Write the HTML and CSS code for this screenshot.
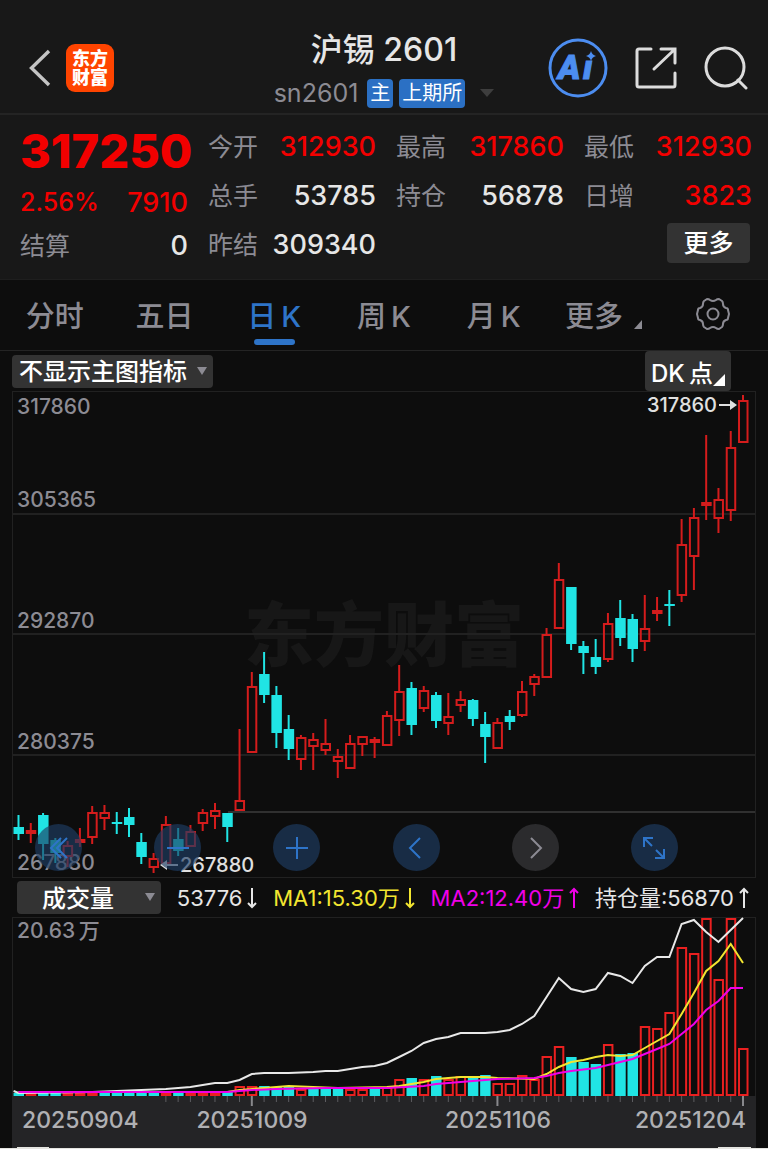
FILE: index.html
```html
<!doctype html>
<html lang="zh-CN">
  <head>
    <meta charset="utf-8" />
    <meta name="viewport" content="width=device-width, initial-scale=1" />
    <title>沪锡 2601</title>
    <link rel="stylesheet" href="styles.css">
  </head>

  <body>
    <header class="header">
      <div class="header-left">
        <button class="icon-button" aria-label="返回">
          <svg width="22" height="38" viewBox="0 0 22 38" fill="none" stroke="#c4c4c4" stroke-width="3.4"><path d="M20 2 L2.5 19 L20 36" /></svg>
        </button>
        <div class="logo">东方<br>财富</div>
      </div>

      <div class="header-title">
        <h1>沪锡 2601</h1>
        <div class="subtitle">
          <span class="code">sn2601</span>
          <span class="badge">主</span>
          <span class="badge">上期所</span>
          <svg class="caret" width="14" height="8" viewBox="0 0 14 8"><path d="M0 0 H14 L7 8 Z" fill="#3e3e3e" /></svg>
        </div>
      </div>

      <div class="header-right">
        <button class="icon-button" aria-label="AI">
          <svg width="60" height="60" viewBox="0 0 60 60">
            <circle cx="30" cy="30" r="28" fill="none" stroke="#4c8df0" stroke-width="3" />
            <text class="ai-text" x="10" y="41">A</text>
            <text class="ai-text" x="35" y="41">ı</text>
            <path d="M43 13 Q44 17 48 18 Q44 19 43 23 Q42 19 38 18 Q42 17 43 13 Z" fill="#4c8df0" />
          </svg>
        </button>
        <button class="icon-button" aria-label="分享">
          <svg width="42" height="42" viewBox="0 0 42 42" fill="none" stroke="#dcdcdc" stroke-width="3" stroke-linecap="round">
            <path d="M16 2 H4 Q2 2 2 4 V38 Q2 40 4 40 H38 Q40 40 40 38 V26" />
            <path d="M26 2 H40 V16 M39 3 L19 22" />
          </svg>
        </button>
        <button class="icon-button" aria-label="搜索">
          <svg width="44" height="44" viewBox="0 0 44 44" fill="none" stroke="#dcdcdc" stroke-width="3" stroke-linecap="round">
            <circle cx="21" cy="21" r="19" />
            <path d="M34 34 L42 42" />
          </svg>
        </button>
      </div>
    </header>

    <section class="quote">
      <div class="summary">
        <div class="price">317250</div>
        <div class="change"><span class="percent">2.56%</span><span>7910</span></div>
        <div class="settle"><span class="label">结算</span><span>0</span></div>
      </div>
      <div class="column">
        <div class="item"><span class="label">今开</span><span class="up">312930</span></div>
        <div class="item"><span class="label">总手</span><span>53785</span></div>
        <div class="item"><span class="label">昨结</span><span>309340</span></div>
      </div>
      <div class="column">
        <div class="item"><span class="label">最高</span><span class="up">317860</span></div>
        <div class="item"><span class="label">持仓</span><span>56878</span></div>
      </div>
      <div class="column">
        <div class="item"><span class="label">最低</span><span class="up">312930</span></div>
        <div class="item"><span class="label">日增</span><span class="up">3823</span></div>
        <div class="item more"><button class="more-button">更多</button></div>
      </div>
    </section>

    <nav class="tabs">
      <button class="tab">分时</button>
      <button class="tab">五日</button>
      <button class="tab active">日&thinsp;K</button>
      <button class="tab">周&thinsp;K</button>
      <button class="tab">月&thinsp;K</button>
      <button class="tab">更多<svg class="corner" width="8" height="9" viewBox="0 0 8 9"><path d="M8 0 V9 H0 Z" fill="#8c8b93" /></svg></button>
      <button class="tab" aria-label="设置">
        <svg width="34" height="32" viewBox="0 0 34 32" fill="none" stroke="#8c8b93" stroke-width="2" stroke-linejoin="round">
          <path d="M11 1 Q13 1 14 2 Q17 4 20 2 Q21 1 23 1 L26 3 Q27 4 27 6 Q27 9 30 10 Q32 10 32 12 L33 16 L32 20 Q32 22 30 22 Q27 23 27 26 Q27 28 26 29 L23 31 Q21 31 20 30 Q17 28 14 30 Q13 31 11 31 L8 29 Q7 28 7 26 Q7 23 4 22 Q2 22 2 20 L1 16 L2 12 Q2 10 4 10 Q7 9 7 6 Q7 4 8 3 Z" />
          <circle cx="17" cy="16" r="5.5" />
        </svg>
      </button>
    </nav>

    <main>
      <div class="toolbar">
        <div class="picker">
          <select class="main-select" aria-label="主图指标"><option>不显示主图指标</option></select>
        </div>
        <button class="dk-button">DK&thinsp;点<svg width="12" height="12" viewBox="0 0 12 12"><path d="M12 0 V12 H0 Z" fill="#fff" /></svg></button>
      </div>

      <div class="kline">
        <svg id="kline" class="chart" viewBox="12 391 744 487"></svg>
        <div class="controls">
          <button class="round" aria-label="最左">
            <svg width="24" height="24" viewBox="0 0 24 24"><path d="M14 2 L4 12 L14 22 M20 2 L10 12 L20 22" /></svg>
          </button>
          <button class="round" aria-label="缩小">
            <svg width="24" height="24" viewBox="0 0 24 24"><path d="M1 12 H23" /></svg>
          </button>
          <button class="round" aria-label="放大">
            <svg width="24" height="24" viewBox="0 0 24 24"><path d="M1 12 H23 M12 1 V23" /></svg>
          </button>
          <button class="round" aria-label="左移">
            <svg width="24" height="24" viewBox="0 0 24 24"><path d="M16 2 L6 12 L16 22" /></svg>
          </button>
          <button class="round disabled" aria-label="右移">
            <svg width="24" height="24" viewBox="0 0 24 24"><path d="M8 2 L18 12 L8 22" /></svg>
          </button>
          <button class="round" aria-label="全屏">
            <svg width="24" height="24" viewBox="0 0 24 24"><path d="M10 10 L2 2 M2 11 V2 H11 M14 14 L22 22 M22 13 V22 H13" /></svg>
          </button>
        </div>
      </div>

      <div class="indicators">
        <div class="picker">
          <select class="volume-select" aria-label="副图指标"><option>成交量</option></select>
        </div>
        <span class="value">53776<svg width="10" height="22" viewBox="0 0 10 22"><path d="M5 1 V20 M1 16 L5 20 L9 16" /></svg></span>
        <span class="value ma1">MA1:15.30万<svg width="10" height="22" viewBox="0 0 10 22"><path d="M5 1 V20 M1 16 L5 20 L9 16" /></svg></span>
        <span class="value ma2">MA2:12.40万<svg width="10" height="22" viewBox="0 0 10 22"><path d="M5 21 V2 M1 6 L5 2 L9 6" /></svg></span>
        <span class="value">持仓量:56870<svg width="10" height="22" viewBox="0 0 10 22"><path d="M5 21 V2 M1 6 L5 2 L9 6" /></svg></span>
      </div>

      <svg id="volume" class="chart" viewBox="12 917 744 231"></svg>
    </main>
    <footer class="next-panel"></footer>

    <script src="script.js"></script>
  </body>
</html>
```

FILE: styles.css
```css
body {
  margin: 0;
  background-color: #0d0d0d;
  color: #e6e6e6;
  font-family: Inter, 'Noto Sans CJK SC', sans-serif;
}

button, select {
  border: none;
  margin: 0;
  font-family: inherit;
  cursor: pointer;
}

svg {
  display: block;
}

/* Header */
.header {
  display: grid;
  grid-template-columns: 1fr auto 1fr;
  align-items: center;
  height: 90px;
  padding: 23px 20px 0;
  background-color: #181818;
  border-bottom: 2px solid #242424;
}

.icon-button {
  padding: 0;
  background: none;
}

.header-left {
  display: flex;
  align-items: center;
  gap: 15px;
  padding-left: 9px;
}

.logo {
  width: 48px;
  padding: 5px 0;
  border-radius: 9px;
  background-color: #ff4400;
  color: #fff;
  font-size: 18px;
  font-weight: 900;
  line-height: 19px;
  text-align: center;
}

.header-title {
  text-align: center;
}

h1 {
  margin: 0;
  padding-top: 2px;
  font-size: 32px;
  font-weight: 500;
  line-height: 48px;
}

.subtitle {
  display: flex;
  align-items: center;
  justify-content: center;
  gap: 6px;
  height: 38px;
}

.code {
  margin-right: 3px;
  color: #8c8b93;
  font-size: 25px;
}

.badge {
  padding: 0 3px;
  border-radius: 4px;
  background-color: #2b70c4;
  color: #fff;
  font-size: 20px;
  line-height: 29px;
}

.caret {
  margin-left: 9px;
}

.header-right {
  display: flex;
  align-items: center;
  justify-content: flex-end;
  gap: 27px;
}

.ai-text {
  fill: #4c8df0;
  stroke: #4c8df0;
  stroke-width: 1;
  font-family: Roboto, sans-serif;
  font-size: 34px;
  font-style: italic;
  font-weight: 900;
}

/* Quote */
.quote {
  display: grid;
  grid-template-columns: repeat(4, minmax(0, 1fr));
  gap: 20px;
  padding: 7px 16px 10px 20px;
  background-color: #181818;
  font-size: 27px;
  font-weight: 500;
}

.label {
  padding-bottom: 3px;
  color: #8c8b93;
  font-size: 25px;
  font-weight: 400;
}

.up, .price, .change {
  color: #f20000;
}

.price {
  font-size: 47px;
  font-weight: 800;
  line-height: 57px;
}

.change, .settle, .item {
  display: flex;
  align-items: center;
  justify-content: space-between;
}

.change {
  height: 46px;
}

.percent {
  font-size: 25px;
}

.settle {
  height: 40px;
}

.item {
  height: 49px;
}

.more {
  justify-content: flex-end;
}

.more-button {
  width: 83px;
  height: 40px;
  margin: 0 2px 4px 0;
  padding: 0 0 3px;
  border-radius: 4px;
  background-color: #333;
  color: #fff;
  font-size: 25px;
  font-weight: 500;
}

/* Period tabs */
.tabs {
  display: flex;
  height: 70px;
  border-top: 1px solid #1e1e1e;
  border-bottom: 1px solid #242424;
}

.tab {
  position: relative;
  display: flex;
  flex: 1 1 0;
  align-items: center;
  justify-content: center;
  padding: 0 0 3px;
  background: none;
  color: #8c8b93;
  font-size: 29px;
  font-weight: 500;
  white-space: nowrap;
}

.tab.active {
  color: #2e74c8;
}

.tab.active::after {
  content: '';
  position: absolute;
  left: 50%;
  bottom: 5px;
  width: 41px;
  height: 6px;
  margin-left: -20px;
  border-radius: 3px;
  background-color: #2e74c8;
}

.corner {
  margin: 22px 0 0 11px;
}

/* Charts */
main {
  margin: 0 12px;
}

.toolbar {
  display: flex;
  align-items: center;
  justify-content: space-between;
  padding-right: 25px;
}

.picker {
  position: relative;
}

.picker::after {
  content: '';
  position: absolute;
  right: 6px;
  top: 12px;
  border: 5px solid transparent;
  border-top: 8px solid #8c8b93;
  border-bottom: 0;
  pointer-events: none;
}

.main-select, .volume-select {
  appearance: none;
  height: 33px;
  border-radius: 4px;
  background-color: #333;
  color: #fff;
  font-size: 24px;
  font-weight: 500;
}

.main-select {
  width: 201px;
  padding: 1px 7px 0;
}

.volume-select {
  width: 144px;
  padding: 1px 25px 0;
}

.dk-button {
  display: flex;
  align-items: center;
  height: 40px;
  padding: 0 6px;
  border-radius: 4px;
  background-color: #333;
  color: #fff;
  font-size: 24px;
  font-weight: 500;
}

.dk-button svg {
  margin-top: 18px;
}

.kline {
  position: relative;
}

.chart {
  width: 100%;
  height: auto;
}

.controls {
  position: absolute;
  right: 78px;
  bottom: 7px;
  left: 23px;
  display: flex;
  justify-content: space-between;
}

.round {
  display: flex;
  align-items: center;
  justify-content: center;
  width: 47px;
  height: 47px;
  padding: 0;
  border-radius: 50%;
  background-color: rgba(30, 62, 100, 0.65);
}

.round svg {
  fill: none;
  stroke: #2e74c8;
  stroke-width: 2;
}

.round.disabled {
  background-color: #2b2b2d;
}

.round.disabled svg {
  stroke: #8c8b93;
}

.indicators {
  display: flex;
  align-items: center;
  justify-content: space-between;
  height: 39px;
  padding: 0 7px 0 5px;
}

.value {
  display: flex;
  align-items: center;
  gap: 5px;
  font-size: 22px;
  line-height: 32px;
  white-space: nowrap;
}

.value svg {
  fill: none;
  stroke: currentColor;
  stroke-width: 2;
}

.ma1 {
  color: #f2e530;
}

.ma2 {
  color: #f000e8;
}

.price-label {
  fill: #8c8b93;
  font-size: 21px;
  font-weight: 500;
}

.mark-label {
  fill: #e0e0e0;
  font-size: 20px;
  font-weight: 500;
}

.date-label {
  fill: #b0b0b3;
  font-size: 23px;
  font-weight: 500;
}

.watermark {
  fill: #171717;
  font-size: 70px;
  font-weight: 900;
}

.next-panel {
  height: 1px;
  background-color: #e4e4e0;
}
```

FILE: script.js
```javascript
const RED = '#d41c1c';
const CYAN = '#20e4e4';
const VOLUME_RED = '#ea2020';
const STEP = 12.28; // Distance between two trading days
const dayX = i => 18.5 + i * STEP;

// [color, high, body top, body bottom, low]
const candles = [
  ['c', 815, 827, 834, 840], ['r', 823, 830, 834, 843], ['c', 813, 815, 844, 860], ['c', 838, 840, 853, 863],
  ['r', 841, 845, 857, 867], ['r', 828, 839, 843, 847], ['r', 806, 812, 838, 844], ['r', 805, 812, 819, 830],
  ['c', 812, 822, 824, 834], ['c', 808, 817, 825, 837], ['c', 833, 842, 857, 864], ['r', 853, 858, 868, 873],
  ['r', 816, 824, 864, 864], ['c', 828, 839, 851, 856], ['r', 825, 831, 847, 847], ['r', 809, 812, 824, 831],
  ['r', 803, 810, 817, 829], ['c', 813, 813, 827, 842], ['r', 729, 800, 811, 811], ['r', 672, 686, 753, 753],
  ['c', 652, 674, 695, 703], ['c', 686, 695, 733, 748], ['c', 715, 729, 749, 760], ['r', 735, 737, 760, 770],
  ['r', 733, 739, 747, 770], ['r', 719, 743, 751, 755], ['r', 749, 756, 762, 778], ['r', 735, 743, 769, 769],
  ['r', 736, 736, 745, 756], ['r', 737, 739, 743, 758], ['r', 711, 715, 746, 746], ['r', 665, 691, 721, 736],
  ['c', 682, 688, 725, 735], ['r', 686, 690, 709, 712], ['c', 692, 695, 721, 728], ['r', 693, 716, 724, 735],
  ['r', 691, 699, 706, 712], ['c', 699, 700, 719, 726], ['c', 712, 724, 737, 763], ['r', 718, 722, 749, 749],
  ['c', 710, 716, 722, 730], ['r', 681, 691, 716, 717], ['r', 674, 676, 685, 696], ['r', 628, 634, 678, 678],
  ['r', 563, 579, 629, 629], ['c', 587, 587, 644, 650], ['c', 641, 646, 653, 674], ['c', 639, 657, 667, 674],
  ['r', 613, 623, 660, 662], ['c', 600, 618, 638, 646], ['c', 614, 619, 649, 662], ['r', 595, 628, 642, 651],
  ['r', 597, 610, 614, 621], ['c', 590, 604, 606, 626], ['r', 519, 544, 596, 602], ['r', 508, 517, 557, 590],
  ['r', 435, 502, 506, 520], ['r', 488, 499, 519, 533], ['r', 431, 447, 511, 521], ['r', 395, 400, 443, 443]
];

const volumeColors = 'crccrrrcccccrcrrrcrrcccrcccrrcrrcrcrrccrrrrrrcccrccrrrrrrrrr';
const volumeTops = [
  1093, 1092, 1093, 1093, 1092, 1092, 1092, 1093, 1093, 1093, 1093, 1093, 1092, 1093, 1092, 1092, 1092, 1092,
  1086, 1086, 1086, 1087, 1086, 1089, 1088, 1088, 1088, 1089, 1089, 1088, 1087, 1079, 1078, 1079, 1076, 1079,
  1076, 1078, 1075, 1083, 1083, 1075, 1079, 1056, 1046, 1057, 1062, 1064, 1044, 1054, 1053, 1026, 1028, 1012,
  947, 953, 918, 979, 918, 1048
];

// [day, y] points of the three lines
const openInterest = [
  [-0.4, 1091], [0, 1093], [6, 1092], [10, 1090], [12, 1089], [13, 1088], [14, 1087], [15, 1085], [16, 1083], [17, 1083], [18, 1080],
  [19, 1074], [20, 1073], [22, 1073], [24, 1072], [25, 1071], [26, 1071], [27, 1069], [28, 1067], [29, 1066],
  [30, 1063], [31, 1057], [32, 1051], [33, 1043], [34, 1039], [35, 1037], [36, 1033], [38, 1033], [39, 1032],
  [40, 1030], [41, 1024], [42, 1016], [43, 997], [44, 978], [45, 989], [46, 992], [47, 989], [48, 973], [49, 976],
  [50, 983], [51, 966], [52, 957], [53, 957], [54, 924], [55, 920], [56, 932], [57, 942], [58, 930], [59, 918]
];
const ma1 = [
  [0, 1092], [17, 1092], [18, 1090], [20, 1088], [22, 1086], [24, 1087], [26, 1088], [30, 1087], [31, 1086],
  [32, 1084], [33, 1082], [34, 1079], [35, 1078], [36, 1077], [38, 1077], [39, 1078], [42, 1079], [43, 1074],
  [44, 1067], [45, 1062], [46, 1060], [47, 1057], [48, 1055], [49, 1056], [50, 1055], [51, 1048], [52, 1041],
  [53, 1034], [54, 1014], [55, 993], [56, 971], [57, 961], [58, 944], [59, 963]
];
const ma2 = [
  [0, 1092], [17, 1092], [19, 1090], [21, 1089], [25, 1088], [30, 1088], [33, 1086], [34, 1084], [37, 1081],
  [39, 1079], [42, 1078], [43, 1076], [44, 1073], [45, 1071], [47, 1068], [48, 1065], [50, 1059], [51, 1054],
  [52, 1049], [53, 1044], [54, 1034], [55, 1024], [56, 1010], [57, 1001], [58, 988], [59, 988]
];

const line = (x1, y1, x2, y2, color, width) =>
  `<line x1="${x1}" y1="${y1}" x2="${x2}" y2="${y2}" stroke="${color}" stroke-width="${width}" />`;
const text = (x, y, name, value, anchor = 'start') =>
  `<text x="${x}" y="${y}" class="${name}" text-anchor="${anchor}">${value}</text>`;

// Falling days are solid, rising days are hollow
function bar(x, top, bottom, color, red) {
  if (color == 'c') {
    return `<rect x="${x - 5}" y="${top}" width="10.5" height="${bottom - top}" fill="${CYAN}" />`;
  }
  return `<rect x="${x - 4}" y="${top + 1}" width="8.5" height="${Math.max(bottom - top - 2, 1)}" fill="none" stroke="${red}" stroke-width="2" />`;
}

function drawKline() {
  let out = text(384, 661, 'watermark', '东方财富', 'middle');
  out += '<rect x="12.5" y="391.5" width="743" height="486" fill="none" stroke="#212121" />';
  [514, 634, 755].forEach(y => out += line(13, y, 755, y, '#212121', 2));
  out += line(228, 812, 755, 812, '#303030', 2);

  out += text(17, 414, 'price-label', '317860');
  out += text(17, 507, 'price-label', '305365');
  out += text(17, 628, 'price-label', '292870');
  out += text(17, 749, 'price-label', '280375');
  out += text(17, 870, 'price-label', '267880');

  candles.forEach(([color, high, top, bottom, low], i) => {
    const x = dayX(i);
    const stroke = color == 'c' ? CYAN : RED;
    out += line(x, high, x, top, stroke, 2) + line(x, bottom, x, low, stroke, 2) + bar(x, top, bottom, color, RED);
  });

  out += text(717, 412, 'mark-label', '317860', 'end');
  out += line(719, 405, 732, 405, '#e0e0e0', 2) + '<path d="M730 400 L737 405 L730 410 Z" fill="#e0e0e0" />';
  out += text(180, 872, 'mark-label', '267880');
  out += line(166, 865, 178, 865, '#e0e0e0', 2) + '<path d="M167 860 L160 865 L167 870 Z" fill="#e0e0e0" />';
  document.getElementById('kline').innerHTML = out;
}

function drawVolume() {
  const curve = (points, color) =>
    `<polyline points="${points.map(([i, y]) => dayX(i) + ',' + y).join(' ')}" fill="none" stroke="${color}" stroke-width="2" />`;

  let out = '<rect x="12.5" y="917.5" width="743" height="179" fill="none" stroke="#212121" />';
  out += '<rect x="12" y="1096" width="744" height="52" fill="#242426" />';
  out += text(17, 938, 'price-label', '20.63&thinsp;万');
  volumeTops.forEach((top, i) => out += bar(dayX(i), top, 1096, volumeColors[i], VOLUME_RED));
  out += curve(openInterest, '#e8e8e8') + curve(ma1, '#f2e530') + curve(ma2, '#f000e8');

  for (let i = 12; i < 60; i++) {
    const isLabelled = i % 20 == 19;
    out += line(dayX(i), 1096, dayX(i), isLabelled ? 1106 : 1102, isLabelled ? '#88888c' : '#5c5c60', isLabelled ? 2 : 1);
  }
  out += text(22, 1128, 'date-label', '20250904');
  out += text(252, 1128, 'date-label', '20251009', 'middle');
  out += text(498, 1128, 'date-label', '20251106', 'middle');
  out += text(746, 1128, 'date-label', '20251204', 'end');

  // Top edge of the panel that follows
  out += line(17, 1147.5, 49, 1147.5, '#e4e4e0', 1) + line(718, 1147.5, 751, 1147.5, '#e4e4e0', 1);
  document.getElementById('volume').innerHTML = out;
}

drawKline();
drawVolume();
```
